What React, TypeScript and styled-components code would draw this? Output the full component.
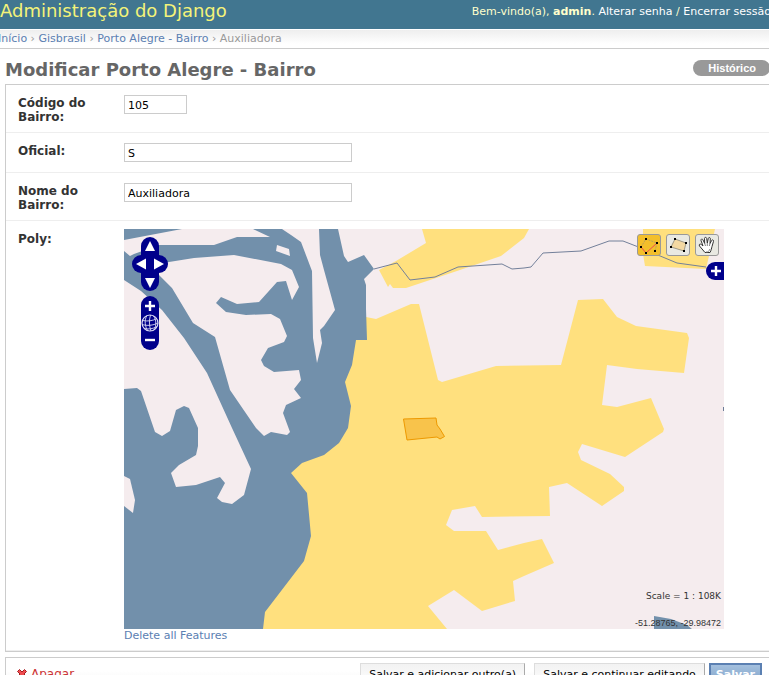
import React from "react";
import styled, { createGlobalStyle, css } from "styled-components";

const sans = `"DejaVu Sans", "Lucida Grande", Verdana, sans-serif`;
const arial = `"Liberation Sans", Arial, Helvetica, sans-serif`;

const GlobalStyle = createGlobalStyle`
  * { box-sizing: border-box; }
  body {
    margin: 0;
    overflow: hidden;
    background: #fff;
    color: #333;
    font: 11px/14px ${sans};
  }
  a { color: #5b80b2; text-decoration: none; }
`;

const Page = styled.div`
  margin: 0 -16px 0 -10px;
`;

const Header = styled.header`
  display: flex;
  justify-content: space-between;
  align-items: flex-start;
  height: 29px;
  padding: 0 14px 0 10px;
  background: #417690;
  color: #ffc;
  white-space: nowrap;
`;

const SiteName = styled.div`
  color: #f4f379;
  font-size: 18px;
  line-height: 22px;
`;

const UserTools = styled.div`
  padding-top: 5px;
  a { color: #fff; }
`;

const Breadcrumbs = styled.nav`
  height: 20px;
  padding: 2px 8px;
  border-top: 1px solid #fff;
  border-bottom: 1px solid #ccc;
  background: linear-gradient(#eee, #fff 14px);
  color: #999;
`;

const Content = styled.main`
  margin: 10px 15px;
`;

const TitleBar = styled.div`
  display: flex;
  justify-content: space-between;
  align-items: flex-start;
  height: 25px;
`;

const Title = styled.h1`
  margin: 0;
  color: #666;
  font-size: 18px;
  line-height: 22px;
`;

const HistoryLink = styled.a`
  margin-top: 1px;
  padding: 0 14px 0 15px;
  border-radius: 8px;
  background: #999;
  font: bold 11px/16px ${arial};
  && { color: #fff; }
`;

const Module = styled.section`
  margin-bottom: 5px;
  border: 1px solid #ccc;
`;

const Row = styled.div`
  display: flex;
  align-items: flex-start;
  min-height: 40px;
  padding: 8px 12px;
  border-bottom: 1px solid #eee;
`;

const Label = styled.label`
  flex: none;
  width: 106px;
  padding: 3px 10px 0 0;
  font-size: 12px;
  font-weight: bold;
`;

const TextInput = styled.input<{ $short?: boolean }>`
  width: ${(p) => (p.$short ? "63px" : "228px")};
  height: 19px;
  margin: 2px 0;
  padding: 3px 3px 1px;
  border: 1px solid #ccc;
  background: #fff;
  color: #000;
  font: 11px/13px ${sans};
`;

const MapField = styled.div`
  line-height: 13px;
`;

const MapBox = styled.div`
  position: relative;
  width: 600px;
  height: 400px;
  overflow: hidden;
  background: #f5ecee;
`;

const MapDrawing = styled.svg`
  display: block;
  width: 100%;
  height: 100%;
`;

const bareButton = css`
  display: block;
  padding: 0;
  border: 0;
  svg { display: block; }
`;

const NavControls = styled.div`
  position: absolute;
  top: 8px;
  left: 8px;
  display: flex;
  flex-direction: column;
  align-items: center;
`;

const PanRow = styled.div`
  display: flex;
`;

const ZoomBar = styled.div`
  margin-top: 5px;
`;

const NavButton = styled.button<{ $radius?: string }>`
  ${bareButton}
  width: 18px;
  height: 18px;
  border-radius: ${(p) => p.$radius ?? "0"};
  background: #00008b;
`;

const EditTools = styled.div`
  position: absolute;
  top: 5px;
  right: 5px;
  display: flex;
  gap: 5px;
`;

const ToolButton = styled.button<{ $active?: boolean }>`
  ${bareButton}
  width: 24px;
  height: 22px;
  border: 1px solid #999;
  border-radius: 3px;
  background: ${(p) => (p.$active ? "#f3bf2b" : "#e9e9e2")};
`;

const LayerToggle = styled.div`
  position: absolute;
  top: 33px;
  right: 0;
`;

const Readout = styled.div`
  position: absolute;
  right: 3px;
  bottom: 0;
  display: flex;
  flex-direction: column;
  align-items: flex-end;
  gap: 15px;
  color: #333;
  font-size: 9px;
  line-height: 12px;
`;

const Coordinates = styled.span`
  font-family: ${arial};
`;

const SubmitRow = styled.div`
  display: flex;
  align-items: flex-start;
  height: 38px;
  padding: 5px 7px;
  border: 1px solid #ccc;
  background: linear-gradient(#fff 13px, #eee);
  white-space: nowrap;
`;

const DeleteLink = styled.a`
  display: flex;
  align-items: center;
  gap: 4px;
  margin: 3px auto 0 4px;
  font-size: 12px;
  line-height: 16px;
  && { color: #cc3434; }
`;

const SubmitButton = styled.button<{ $primary?: boolean }>`
  height: 24px;
  margin-left: ${(p) => (p.$primary ? "4px" : "9px")};
  padding: 3px 8px;
  border: 1px solid;
  border-color: #ddd #aaa #aaa #ddd;
  background: linear-gradient(#f2f2f2, #fff);
  color: #000;
  font: 11px/14px ${sans};
  ${(p) =>
    p.$primary &&
    css`
      padding: 2px 5px;
      border: 2px solid #5b80b2;
      background: linear-gradient(#a4c0de, #7ca0c7);
      color: #fff;
      font-weight: bold;
    `}
`;

const water =
  "0,0 214,0 220,27 224,33 240,26 250,40 240,50 242,56 242,80 243,111 232,111 228,136 221,153 227,177 224,199 215,214 200,226 178,234 167,244 183,264 187,307 180,332 141,383 139,400 0,400";

const islands = [
  "0,11 58,0 129,0 146,8 113,8 90,16 35,16 10,25 6,27 0,22",
  "45,33 70,29 110,26 157,35 168,41 175,58 168,71 162,52 153,53 135,73 113,75 97,68 92,74 102,83 122,86 147,85 156,90 163,107 160,113 144,119 137,131 140,137 150,143 175,141 177,151 170,160 177,169 162,176 159,184 166,203 163,206 147,203 140,207 132,199 106,161 91,108 69,94 48,59 35,46 33,36",
  "0,51 17,62 38,81 60,109 83,144 108,199 127,240 120,266 108,275 98,273 93,269 101,254 96,248 72,256 52,258 47,244 55,236 72,226 74,217 74,199 65,179 60,177 52,181 46,202 38,207 31,203 17,162 13,159 0,160",
  "0,247 6,250 11,271 9,284 0,277",
  "153,16 165,20 166,27 152,22",
  "158,0 167,6 177,13 188,42 189,109 193,134 198,114 196,101 200,97 211,81 200,41 196,26 195,0",
];

const urban = [
  "242,88 252,90 287,75 295,75 314,151 318,153 372,137 437,136 454,71 479,70 493,88 512,97 563,104 565,109 560,144 513,140 483,136 478,176 493,178 527,169 540,200 539,203 501,228 458,215 454,223 457,231 486,245 500,258 500,262 478,277 443,254 425,258 426,287 358,288 351,277 328,281 322,296 330,302 362,302 374,321 400,314 418,310 430,334 400,347 389,352 391,372 358,382 330,361 304,377 323,400 130,400 160,230 210,140",
  "298,0 302,14 272,32 255,41 264,58 266,55 269,59 282,59 333,42 377,27 400,9 405,0",
  "519,0 519,25 521,37 582,40 591,0",
];

const CityMap = () => (
  <MapDrawing viewBox="0 0 600 400" aria-hidden="true">
    {urban.map((p) => <polygon key={p} points={p} fill="#ffe07e" />)}
    <polygon points={water} fill="#7290ab" />
    {islands.map((p) => <polygon key={p} points={p} fill="#f5ecee" />)}
    <polygon points="530,387 547,390 563,396 568,400 530,400" fill="#7290ab" />
    <path d="M599.5 178v4" stroke="#6d7c97" />
    <polyline
      points="250,40 273,34 286,51 311,48 334,38 378,35 388,40 400,39 407,38 419,24 457,22 485,12 499,12 517,19 553,34 582,38"
      fill="none"
      stroke="#73809a"
    />
    <polygon
      points="279.5,190 312,189 313,196 316,200 320.500,207.500 316,210 313,208 283,211"
      fill="#ee9900"
      fillOpacity="0.4"
      stroke="#ee9900"
    />
  </MapDrawing>
);

const NavIcon = ({ d, line }: { d: string; line?: boolean }) => (
  <svg width="18" height="18" viewBox="0 0 18 18" aria-hidden="true">
    <path
      d={d}
      fill={line ? "none" : "#fff"}
      stroke={line ? "#fff" : "none"}
      strokeWidth="2.400"
    />
  </svg>
);

const GlobeIcon = () => (
  <svg width="18" height="18" viewBox="0 0 18 18" fill="none" stroke="#dcdcf6" strokeWidth="0.900" aria-hidden="true">
    <circle cx="9" cy="9" r="8" strokeWidth="1.200" />
    <path d="M9.500 1C8 6 8 12 10 17M6 1.500C3 6 4 13 7 17M12.500 2c3 4 3 10 .5 14M1.500 6.500c5 1 10 .5 14.500-2M1 10.500c5 1.500 11 1 16-1.500M3 14.500c4 1 9 .5 13-2" />
  </svg>
);

const Nodes = ({ points }: { points: number[][] }) => (
  <>
    {points.map(([x, y]) => (
      <rect key={`${x}-${y}`} x={x - 1} y={y - 1} width="2" height="2" fill="#000" />
    ))}
  </>
);

const DrawIcon = () => (
  <svg width="22" height="20" viewBox="0 0 22 20" fill="none" aria-hidden="true">
    <path d="M3 12 8 4l11 4-2 8" stroke="#b9a05c" strokeDasharray="2 1" />
    <path d="m3 12 5 6L19 8" stroke="#ee4a50" />
    <Nodes points={[[8, 4], [19, 8], [17, 16], [8, 18], [3, 12]]} />
  </svg>
);

const ModifyIcon = () => (
  <svg width="22" height="20" viewBox="0 0 22 20" aria-hidden="true">
    <path d="m8 4 11 4-2 8-13-4Z" fill="#f4d9a2" stroke="#96917f" strokeWidth="0.900" />
    <Nodes points={[[8, 4], [19, 8], [17, 16], [4, 12]]} />
  </svg>
);

const HandIcon = () => (
  <svg width="22" height="20" viewBox="0 0 22 20" strokeLinejoin="round" aria-hidden="true">
    <path
      d="M9 17.500 3.500 11C2.500 9.500 4 8.500 5.300 9.500L7 11 5 5.500C4.600 4 6.400 3.500 7 5l1.700 3.500L8.500 3.500C8.500 2 10.500 2 10.700 3.500l.6 4.500 1-4.500c.3-1.500 2.200-1.200 2 .3L14 8.500l1.600-3c.7-1.200 2.300-.5 1.900.8L16 11.500c-.6 2-.6 3.500-2 6Z"
      fill="#fff"
      stroke="#333"
      strokeWidth="1"
    />
    <path d="M8.700 8.500 9.500 11M11.300 8v3M14 8.500 13.300 11M10 17c2 .5 3-1 4-3" fill="none" stroke="#777" strokeWidth="0.900" />
  </svg>
);

const DeleteIcon = () => (
  <svg width="10" height="10" viewBox="0 0 10 10" aria-hidden="true">
    <path
      d="M.5 2.500 2.500.5 5 3 7.500.5l2 2L7 5l2.500 2.500-2 2L5 7 2.500 9.500l-2-2L3 5Z"
      fill="#ef4c50"
      stroke="#a51d20"
    />
  </svg>
);

export default function App() {
  return (
    <>
      <GlobalStyle />
      <Page>
        <Header>
          <SiteName>Administração do Django</SiteName>
          <UserTools>
            Bem-vindo(a), <strong>admin</strong>. <a href="#senha">Alterar senha</a> /{" "}
            <a href="#sair">Encerrar sessão</a>
          </UserTools>
        </Header>
        <Breadcrumbs>
          <a href="#inicio">Início</a> › <a href="#gisbrasil">Gisbrasil</a> ›{" "}
          <a href="#bairros">Porto Alegre - Bairro</a> › Auxiliadora
        </Breadcrumbs>
        <Content>
          <TitleBar>
            <Title>Modificar Porto Alegre - Bairro</Title>
            <HistoryLink href="#historico">Histórico</HistoryLink>
          </TitleBar>
          <Module>
            <Row>
              <Label htmlFor="codigo">Código do Bairro:</Label>
              <TextInput id="codigo" $short defaultValue="105" />
            </Row>
            <Row>
              <Label htmlFor="oficial">Oficial:</Label>
              <TextInput id="oficial" defaultValue="S" />
            </Row>
            <Row>
              <Label htmlFor="nome">Nome do Bairro:</Label>
              <TextInput id="nome" defaultValue="Auxiliadora" />
            </Row>
            <Row>
              <Label as="div" id="poly">Poly:</Label>
              <MapField role="group" aria-labelledby="poly">
                <MapBox>
                  <CityMap />
                  <NavControls>
                    <NavButton aria-label="Norte" $radius="9px 9px 0 0"><NavIcon d="M9 4l5 10H4Z" /></NavButton>
                    <PanRow>
                      <NavButton aria-label="Oeste" $radius="9px 0 0 9px"><NavIcon d="M4 9l10-5.500v11Z" /></NavButton>
                      <NavButton aria-label="Leste" $radius="0 9px 9px 0"><NavIcon d="M14 9 4 3.500v11Z" /></NavButton>
                    </PanRow>
                    <NavButton aria-label="Sul" $radius="0 0 9px 9px"><NavIcon d="M9 15 4 5h10Z" /></NavButton>
                    <ZoomBar>
                      <NavButton aria-label="Aproximar" $radius="9px 9px 0 0"><NavIcon line d="M4 10h10M9 5v10" /></NavButton>
                      <NavButton aria-label="Ver tudo"><GlobeIcon /></NavButton>
                      <NavButton aria-label="Afastar" $radius="0 0 9px 9px"><NavIcon line d="M4 8h10" /></NavButton>
                    </ZoomBar>
                  </NavControls>
                  <EditTools>
                    <ToolButton aria-label="Desenhar" $active><DrawIcon /></ToolButton>
                    <ToolButton aria-label="Modificar"><ModifyIcon /></ToolButton>
                    <ToolButton aria-label="Mover"><HandIcon /></ToolButton>
                  </EditTools>
                  <LayerToggle>
                    <NavButton aria-label="Camadas" $radius="9px 0 0 9px"><NavIcon line d="M5 9h10M10 4v10" /></NavButton>
                  </LayerToggle>
                  <Readout>
                    <span>Scale = 1 : 108K</span>
                    <Coordinates>-51.28765, -29.98472</Coordinates>
                  </Readout>
                </MapBox>
                <a href="#limpar">Delete all Features</a>
              </MapField>
            </Row>
          </Module>
          <SubmitRow>
            <DeleteLink href="#apagar"><DeleteIcon />Apagar</DeleteLink>
            <SubmitButton>Salvar e adicionar outro(a)</SubmitButton>
            <SubmitButton>Salvar e continuar editando</SubmitButton>
            <SubmitButton $primary>Salvar</SubmitButton>
          </SubmitRow>
        </Content>
      </Page>
    </>
  );
}
